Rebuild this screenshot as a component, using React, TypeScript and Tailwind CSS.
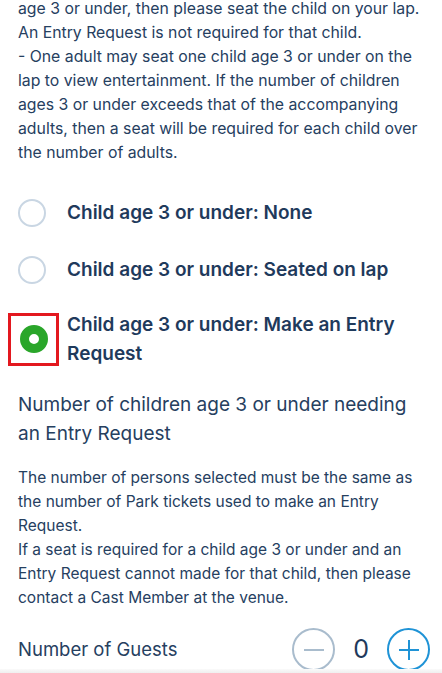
import React from 'react'

const options = [
  { lines: ['Child age 3 or under: None'], selected: false },
  { lines: ['Child age 3 or under: Seated on lap'], selected: false },
  { lines: ['Child age 3 or under: Make an Entry', 'Request'], selected: true },
]

const Lines = ({ lines }: { lines: string[] }) => (
  <>
    {lines.map((l, i) => (
      <span key={i} className="block whitespace-nowrap">
        {l}
      </span>
    ))}
  </>
)

const Radio = ({ selected }: { selected: boolean }) =>
  selected ? (
    <div className="w-[51px] h-[53px] border-[3px] border-[#e3181f] flex items-center justify-center shrink-0 -ml-[10px] mr-[8px]">
      <div className="w-[28px] h-[28px] rounded-full border-[9px] border-[#2aa62a] bg-white" />
    </div>
  ) : (
    <div className="w-[28px] h-[28px] rounded-full border-2 border-[#c9d6e3] shrink-0 mr-[21px]" />
  )

const App = () => {
  return (
    <div
      className="w-[442px] h-[673px] overflow-hidden bg-white text-[#26405f] relative"
      style={{ fontFamily: 'Inter, "Liberation Sans", sans-serif' }}
    >
      <div className="px-[18px] -mt-[3px]">
        <p className="text-[15.8px] leading-[24px]">
          <Lines
            lines={[
              'age 3 or under, then please seat the child on your lap.',
              'An Entry Request is not required for that child.',
              '- One adult may seat one child age 3 or under on the',
              'lap to view entertainment. If the number of children',
              'ages 3 or under exceeds that of the accompanying',
              'adults, then a seat will be required for each child over',
              'the number of adults.',
            ]}
          />
        </p>

        <div className="flex flex-col mt-[33px]">
          {options.map((o, i) => (
            <div key={o.lines[0]} className={`flex items-center ${i === 0 ? '' : i === 1 ? 'mt-[28px]' : 'mt-[26px]'}`}>
              <Radio selected={o.selected} />
              <span className="text-[19px] font-semibold leading-[29px] text-[#1f3a5c]">
                <Lines lines={o.lines} />
              </span>
            </div>
          ))}
        </div>

        <h2 className="text-[19px] leading-[29px] mt-[22px]">
          <Lines lines={['Number of children age 3 or under needing', 'an Entry Request']} />
        </h2>

        <p className="text-[15.5px] leading-[24px] mt-[18px]">
          <Lines
            lines={[
              'The number of persons selected must be the same as',
              'the number of Park tickets used to make an Entry',
              'Request.',
              'If a seat is required for a child age 3 or under and an',
              'Entry Request cannot made for that child, then please',
              'contact a Cast Member at the venue.',
            ]}
          />
        </p>

        <div className="flex items-center justify-between mt-[18px]">
          <span className="text-[18.5px]">Number of Guests</span>
          <div className="flex items-center gap-[18px] -mr-[6px]">
            <button className="w-[43px] h-[43px] rounded-full border-2 border-[#a9bccd] flex items-center justify-center">
              <span className="w-[20px] h-[2px] bg-[#a9bccd]" />
            </button>
            <span className="text-[25px] text-[#1f3a5c]">0</span>
            <button className="w-[43px] h-[43px] rounded-full border-2 border-[#1f93d6] flex items-center justify-center relative">
              <span className="w-[20px] h-[2px] bg-[#1f93d6]" />
              <span className="absolute w-[2px] h-[20px] bg-[#1f93d6]" />
            </button>
          </div>
        </div>
      </div>
      <div className="absolute left-0 right-0 bottom-0 h-[4px] bg-gradient-to-b from-[#fafafa] to-[#efefef]" />
    </div>
  )
}

export default App
